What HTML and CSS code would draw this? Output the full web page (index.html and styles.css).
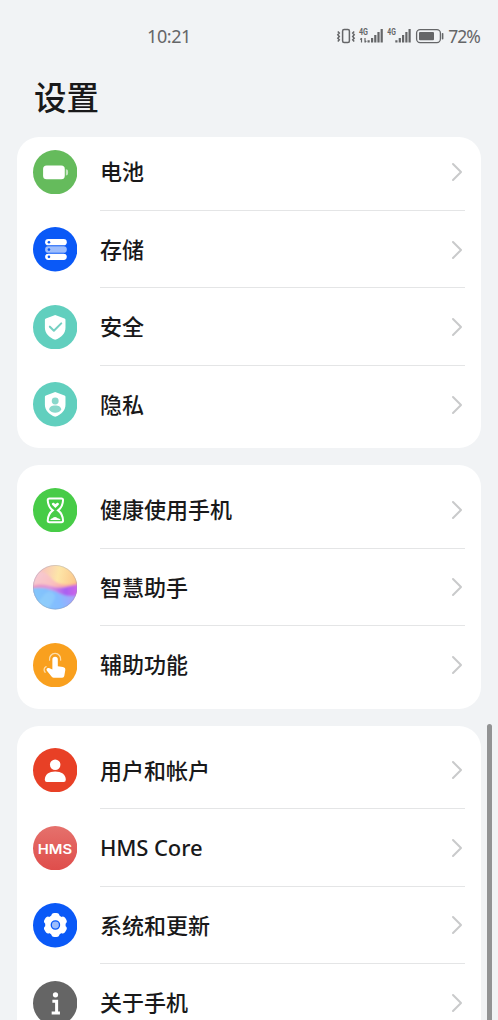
FILE: index.html
```html
<!DOCTYPE html>
<html lang="zh-CN">
<head>
<meta charset="utf-8">
<title>设置</title>
<link rel="stylesheet" href="styles.css">
</head>
<body>
<svg width="0" height="0" class="defs">
  <symbol id="chevron" viewBox="0 0 12 20"><path d="M2 2l8 8-8 8" fill="none" stroke="#c9cacb" stroke-width="2" stroke-linecap="round" stroke-linejoin="round"/></symbol>
</svg>
<div class="screen">
  <header class="status">
    <span class="time">10:21</span>
    <div class="indicators">
      <svg width="105" height="20" viewBox="337 26 105 20" fill="#656668">
        <rect x="342.600" y="29.600" width="6.800" height="12.800" rx="1.500" fill="none" stroke="#656668" stroke-width="1.500"/>
        <path d="M337.800 31.500l1.500 1.600-1.500 1.700 1.500 1.700-1.500 1.700 1.500 1.600-1.500 1.600M354.200 31.500l-1.500 1.600 1.500 1.700-1.500 1.700 1.500 1.700-1.500 1.600 1.500 1.600" fill="none" stroke="#656668" stroke-width="1.500"/>
        <text x="359" y="35" class="net" textLength="9" lengthAdjust="spacingAndGlyphs">4G</text>
        <path d="M361.500 38v4.500M360.300 39.600l1.200-1.500M365 38v4.500M365 42.400l1.300-1.500" stroke="#656668" stroke-width="1.200" fill="none"/>
        <path d="M367.500 40.300h2.200v2.200h-2.200zM371 38h2.200v4.500h-2.200zM374.200 35h2.200v7.500h-2.200zM377.400 32h2.200v10.500h-2.200zM380.600 29h2.200v13.500h-2.200z"/>
        <text x="387.300" y="35" class="net" textLength="8.500" lengthAdjust="spacingAndGlyphs">4G</text>
        <path d="M395.300 40.300h2.200v2.200h-2.200zM398.700 38h2.200v4.500h-2.200zM402 35h2.200v7.500h-2.200zM405.300 32h2.200v10.500h-2.200zM408.500 29h2.200v13.500h-2.200z"/>
        <rect x="416.600" y="29.600" width="23.800" height="13" rx="3.500" fill="none" stroke="#656668" stroke-width="1.300"/>
        <rect x="419" y="32" width="15" height="8.200" rx="1"/>
        <rect x="441.800" y="33" width="1.600" height="6.500" rx=".7"/>
      </svg>
      <span class="percent">72%</span>
    </div>
  </header>
  <h1 class="title">设置</h1>

  <main class="list">
    <section class="card scrolled">
      <div class="row">
        <svg class="icon" viewBox="0 0 44 44"><circle cx="22" cy="22" r="22" fill="#65bb5c"/><rect x="10" y="15.300" width="21.500" height="13.600" rx="3.500" fill="#fff"/><path d="M32.500 19c2 0 2.300 1 2.300 3s-.3 3.300-2.300 3.300z" fill="#c4e5c0"/></svg>
        <div class="cell"><span>电池</span><svg class="chev"><use href="#chevron"/></svg></div>
      </div>
      <div class="row">
        <svg class="icon" viewBox="0 0 44 44"><circle cx="22" cy="22" r="22" fill="#0a59f7"/><rect x="12" y="12" width="21.500" height="6.200" rx="3.100" fill="#fff"/><rect x="12" y="19.200" width="21.500" height="6.400" rx="3.100" fill="#9dbdfc"/><rect x="12" y="26.500" width="21.500" height="6.200" rx="3.100" fill="#fff"/><g fill="#0a59f7"><circle cx="15.800" cy="15.100" r="1.300"/><circle cx="15.800" cy="22.400" r="1.300"/><circle cx="15.800" cy="29.600" r="1.300"/></g></svg>
        <div class="cell"><span>存储</span><svg class="chev"><use href="#chevron"/></svg></div>
      </div>
      <div class="row">
        <svg class="icon" viewBox="0 0 44 44"><circle cx="22" cy="22" r="22" fill="#61cfbe"/><path d="M22 10l9.200 3.300q1 .4 1 1.500v7.400c0 6-4.200 9.800-10.200 12.300-6-2.500-10.200-6.300-10.200-12.300v-7.400q0-1.100 1-1.500z" fill="#fff"/><path d="M16.700 21.500l4 4 7.300-7.300" fill="none" stroke="#76d0c2" stroke-width="2" stroke-linecap="round" stroke-linejoin="round"/></svg>
        <div class="cell"><span>安全</span><svg class="chev"><use href="#chevron"/></svg></div>
      </div>
      <div class="row">
        <svg class="icon" viewBox="0 0 44 44"><circle cx="22" cy="22" r="22" fill="#61cfbe"/><path d="M22 10l9.200 3.300q1 .4 1 1.500v7.400c0 6-4.200 9.800-10.200 12.300-6-2.500-10.200-6.300-10.200-12.300v-7.400q0-1.100 1-1.500z" fill="#fff"/><circle cx="22" cy="18.800" r="3.400" fill="#88d8cb"/><path d="M16 27.500c0-3 2.500-4.300 6-4.300s6 1.300 6 4.300c-1.300 1.900-3.500 3-6 3s-4.700-1.100-6-3z" fill="#88d8cb"/></svg>
        <div class="cell"><span>隐私</span><svg class="chev"><use href="#chevron"/></svg></div>
      </div>
    </section>

    <section class="card">
      <div class="row">
        <svg class="icon" viewBox="0 0 44 44"><circle cx="22" cy="22" r="22" fill="#47cc47"/><path d="M16.300 10.500h11.800q1.800 0 1.700 1.700c-.3 5-2 7.800-5 10 3 2.200 4.700 5 5 10q.1 1.700-1.700 1.700H16.300q-1.800 0-1.700-1.700c.3-5 2-7.800 5-10-3-2.200-4.700-5-5-10q-.1-1.700 1.700-1.700z" fill="none" stroke="#fff" stroke-width="2"/><path d="M22.200 19.800l-3.300-3.200c-1-1.400 1-2.800 2.200-1.600l1.100.8 1.100-.8c1.200-1.200 3.200.2 2.200 1.600z" fill="#fff"/><path d="M17 31.800c.8-1.700 2.300-1.500 2.800-2.200.8-1 3-1.300 4 0 .6.700 2.800.5 3.600 2.200z" fill="#fff"/></svg>
        <div class="cell"><span>健康使用手机</span><svg class="chev"><use href="#chevron"/></svg></div>
      </div>
      <div class="row">
        <svg class="icon" viewBox="0 0 44 44">
          <defs>
            <clipPath id="orb"><circle cx="22" cy="22" r="22"/></clipPath>
            <filter id="soft"><feGaussianBlur stdDeviation=".8"/></filter>
            <linearGradient id="sky" x1="0" y1=".2" x2="1" y2=".4"><stop offset="0" stop-color="#f5b3c6"/><stop offset=".55" stop-color="#fde6a8"/><stop offset="1" stop-color="#fbc488"/></linearGradient>
            <linearGradient id="dune" x1="0" y1="0" x2="1" y2=".4"><stop offset="0" stop-color="#f5cdd8"/><stop offset=".55" stop-color="#fabfc0"/><stop offset="1" stop-color="#fb9a90"/></linearGradient>
            <linearGradient id="wave" x1="0" y1="0" x2="1" y2="0"><stop offset="0" stop-color="#ee94b8"/><stop offset=".4" stop-color="#dd94dc"/><stop offset=".7" stop-color="#a860f2"/><stop offset="1" stop-color="#d868e4"/></linearGradient>
            <linearGradient id="sea" x1="0" y1=".5" x2="1" y2=".3"><stop offset="0" stop-color="#83c9fa"/><stop offset=".55" stop-color="#83bcff"/><stop offset="1" stop-color="#b896fa"/></linearGradient>
          </defs>
          <g clip-path="url(#orb)">
            <path d="M0 0h44v44H0z" fill="url(#sky)"/>
            <g filter="url(#soft)">
              <path d="M-3 10c10-6 16-3 21 3 7 8 17 8 29 4v14H-3z" fill="url(#dune)"/>
              <path d="M-3 22c9-5 17-2 25 0 9 1.500 15-2 25-3v22H-3z" fill="url(#wave)"/>
              <path d="M-3 23c9-1 16-1 25 3 9 5 15 6 25 3v19H-3z" fill="url(#sea)"/>
              <path d="M-2 42c9-3 10-13 18-16 5 1 7 4 5 8-2 6-7 10-12 14z" fill="#9ddafa" opacity=".4"/>
            </g>
          </g>
          <circle cx="22" cy="22" r="21.600" fill="none" stroke="#8994b6" stroke-opacity=".4" stroke-width=".8"/>
        </svg>
        <div class="cell"><span>智慧助手</span><svg class="chev"><use href="#chevron"/></svg></div>
      </div>
      <div class="row">
        <svg class="icon" viewBox="0 0 44 44"><circle cx="22" cy="22" r="22" fill="#f9a01e"/><path d="M19.200 16.400a2.700 2.700 0 0 1 5.400 0v6.600l5 .8c1.800.3 2.700 1.500 2.400 3.300l-1 5.600q-.3 1.800-2 1.800h-8.500q-1 0-1.700-.8l-5-6.200c-1.200-1.500.3-3.300 2-2.600l3.400 1.300z" fill="#fff"/><path d="M16.400 17a5.600 5.600 0 1 1 11 0M13 23.500a3.400 3.400 0 0 0-1 5.500" fill="none" stroke="#fcdca8" stroke-width="1.300" stroke-linecap="round"/></svg>
        <div class="cell"><span>辅助功能</span><svg class="chev"><use href="#chevron"/></svg></div>
      </div>
    </section>

    <section class="card">
      <div class="row">
        <svg class="icon" viewBox="0 0 44 44"><circle cx="22" cy="22" r="22" fill="#e84026"/><circle cx="22" cy="16.600" r="5.200" fill="#fff"/><path d="M11.700 31.500C11.700 26 16 23.300 22 23.300S32.500 26 32.500 31.500q0 2.300-2 2.300H13.700q-2 0-2-2.300z" fill="#fff"/></svg>
        <div class="cell"><span>用户和帐户</span><svg class="chev"><use href="#chevron"/></svg></div>
      </div>
      <div class="row">
        <svg class="icon" viewBox="0 0 44 44"><defs><linearGradient id="hms" x2="0" y2="1"><stop stop-color="#e5716c"/><stop offset="1" stop-color="#df4d4b"/></linearGradient></defs><circle cx="22" cy="22" r="22" fill="url(#hms)"/><text x="4.800" y="27.300" class="hms" textLength="34" lengthAdjust="spacingAndGlyphs">HMS</text></svg>
        <div class="cell"><span class="latin">HMS Core</span><svg class="chev"><use href="#chevron"/></svg></div>
      </div>
      <div class="row">
        <svg class="icon" viewBox="0 0 44 44"><circle cx="22" cy="22" r="22" fill="#0a59f7"/><g fill="#fff"><circle cx="22.200" cy="21.800" r="10.200"/><rect x="18.200" y="9.900" width="8" height="23.800" rx="3"/><rect x="18.200" y="9.900" width="8" height="23.800" rx="3" transform="rotate(60 22.200 21.800)"/><rect x="18.200" y="9.900" width="8" height="23.800" rx="3" transform="rotate(120 22.200 21.800)"/></g><circle cx="22.200" cy="21.800" r="4.100" fill="#9dbdfc" stroke="#0a59f7" stroke-width="1.300"/></svg>
        <div class="cell"><span>系统和更新</span><svg class="chev"><use href="#chevron"/></svg></div>
      </div>
      <div class="row">
        <svg class="icon" viewBox="0 0 44 44"><circle cx="22" cy="22" r="22" fill="#656565"/><circle cx="22.300" cy="13.700" r="2.600" fill="#fff"/><path d="M19.200 20h4.200v11M18.500 31.700h8.200" fill="none" stroke="#fff" stroke-width="3"/></svg>
        <div class="cell"><span>关于手机</span><svg class="chev"><use href="#chevron"/></svg></div>
      </div>
    </section>
  </main>
  <div class="scrollbar"></div>
</div>
</body>
</html>
```
FILE: styles.css
```css
* { box-sizing: border-box; }
html, body { margin: 0; height: 100%; overflow: hidden; }
body {
  background: #f1f3f5;
  color: #19191a;
  font-family: "Noto Sans CJK SC", sans-serif;
}
.defs { display: block; }
.screen { position: relative; height: 1020px; overflow: hidden; }
.status {
  display: flex;
  justify-content: space-between;
  align-items: center;
  height: 72px;
  padding: 0 18px 0 147px;
  color: #656668;
  font-family: "Noto Sans", sans-serif;
  font-size: 17.5px;
}
.time { font-size: 18px; letter-spacing: -.4px; }
.indicators { display: flex; align-items: center; gap: 6px; }
.indicators svg { overflow: visible; }
.percent { letter-spacing: -.9px; }
.net { font: bold 8.500px "Roboto", sans-serif; }
.title {
  height: 65px;
  margin: 0;
  padding-left: 34px;
  font-size: 32.5px;
  font-weight: 500;
  line-height: 48px;
}
.list { display: flex; flex-direction: column; gap: 17px; padding: 0 17px; }
.card {
  padding: 5.800px 16px 4.800px 16px;
  border-radius: 22px;
  background: #fff;
  overflow: hidden;
  flex: none;
}
.card.scrolled { padding-top: 0; }
.scrolled .row:first-child { margin-top: -3.900px; }
.row { display: flex; align-items: center; gap: 22.500px; height: 77.600px; }
.icon { width: 44.400px; height: 44.400px; flex: none; }
.cell {
  display: flex;
  flex: 1;
  align-items: center;
  justify-content: space-between;
  height: 100%;
  border-bottom: 1px solid #e4e5e6;
  font-size: 22px;
  font-weight: 500;
}
.cell span { padding-bottom: 2.500px; }
.row:last-child .cell { border-bottom-color: transparent; }
.cell .latin { padding-bottom: .500px; font-family: "Noto Sans", sans-serif; font-size: 22px; letter-spacing: -.1px; }
.chev { width: 12px; height: 20px; margin: 1px 2px 0 0; flex: none; }
.hms { fill: #fff; font: 600 12.500px "Inter", sans-serif; }
.scrollbar {
  position: absolute;
  top: 724px;
  right: 6px;
  width: 5px;
  height: 310px;
  border-radius: 3px;
  background: #929394;
}
```
